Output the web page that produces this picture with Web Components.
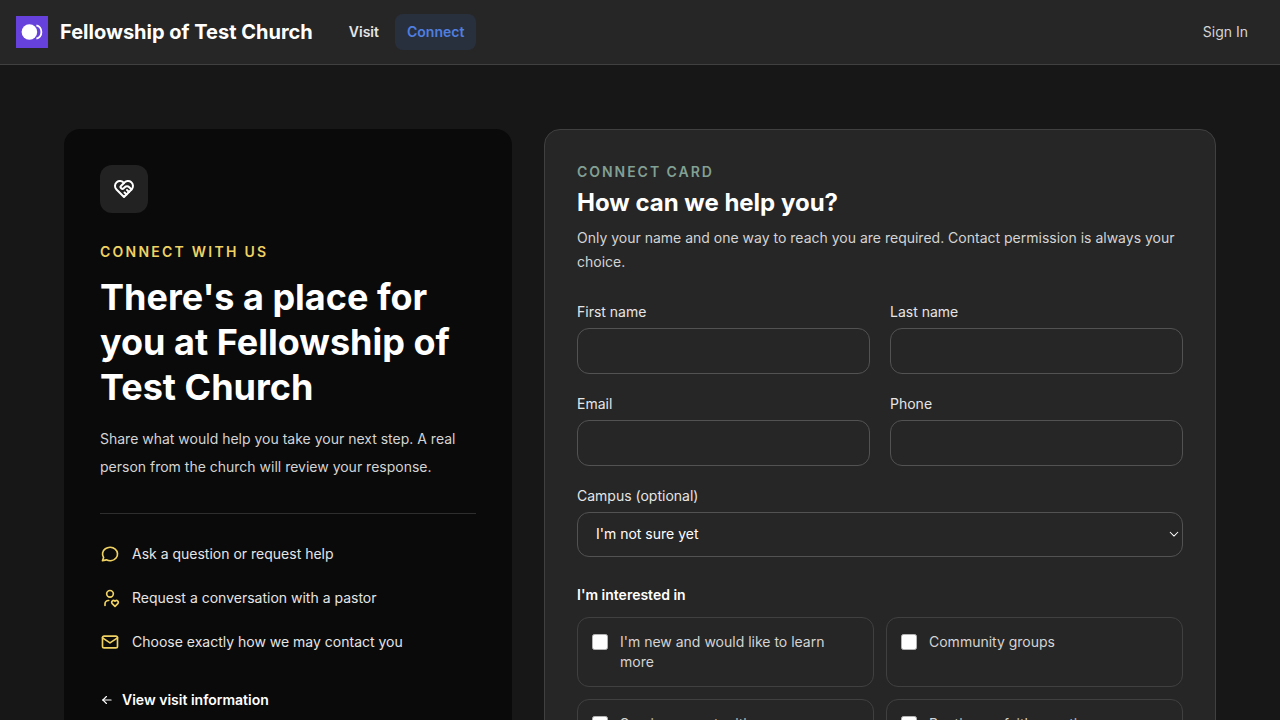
<!DOCTYPE html>
<html lang="en">
<head>
<meta charset="utf-8">
<title>Connect - Fellowship of Test Church</title>
<style>
  html { color-scheme: light; }

  body {
    margin: 0;
    height: 720px;
    overflow: hidden;
    background: #171717;
    color: #fff;
    font: 14px/20px Inter, sans-serif;
    -webkit-font-smoothing: antialiased;
  }
</style>
</head>
<body>
<connect-page>
  <site-header slot="header" name="Fellowship of Test Church">
    <nav-link>Visit</nav-link>
    <nav-link active>Connect</nav-link>
    <span slot="account">Sign In</span>
  </site-header>

  <welcome-panel eyebrow="Connect with us">
    <span slot="title">There's a place for you at Fellowship of Test Church</span>
    <span slot="text">Share what would help you take your next step. A real person from the church will review your response.</span>
    <icon-row icon="message">Ask a question or request help</icon-row>
    <icon-row icon="userHeart">Request a conversation with a pastor</icon-row>
    <icon-row icon="mail">Choose exactly how we may contact you</icon-row>
    <span slot="link">View visit information</span>
  </welcome-panel>

  <connect-card eyebrow="Connect card">
    <span slot="title">How can we help you?</span>
    <span slot="text">Only your name and one way to reach you are required. Contact permission is always your choice.</span>
    <text-field slot="field" label="First name"></text-field>
    <text-field slot="field" label="Last name"></text-field>
    <text-field slot="field" label="Email" type="email"></text-field>
    <text-field slot="field" label="Phone" type="tel"></text-field>
    <select-field slot="field" label="Campus (optional)" value="I'm not sure yet"></select-field>
    <check-option slot="option">I'm new and would like to learn more</check-option>
    <check-option slot="option">Community groups</check-option>
    <check-option slot="option">Serving opportunities</check-option>
    <check-option slot="option">Baptism or faith questions</check-option>
  </connect-card>
</connect-page>

<script>
const icons = {
  handshake: [
    'M19.5 12.572l-7.5 7.428l-7.5 -7.428a5 5 0 1 1 7.5 -6.566a5 5 0 1 1 7.5 6.572',
    'M12 6l-3.293 3.293a1 1 0 0 0 0 1.414l.543 .543c.69 .69 1.81 .69 2.5 0l1 -1a3.182 3.182 0 0 1 4.5 0l2.25 2.25',
    'M12.5 15.5l2 2',
    'M15 13l2 2'
  ],
  message: ['M3 20l1.3 -3.9c-2.324 -3.437 -1.426 -7.872 2.1 -10.374c3.526 -2.501 8.59 -2.296 11.845 .48c3.255 2.777 3.695 7.266 1.029 10.501c-2.666 3.235 -7.615 4.215 -11.574 2.293l-4.7 1'],
  userHeart: [
    'M8 7a4 4 0 1 0 8 0a4 4 0 0 0 -8 0',
    'M6 21v-2a4 4 0 0 1 4 -4h.5',
    'M18 22l3.35 -3.284a2.143 2.143 0 0 0 .005 -3.071a2.242 2.242 0 0 0 -3.129 -.006l-.224 .22l-.223 -.22a2.242 2.242 0 0 0 -3.128 -.006a2.143 2.143 0 0 0 -.006 3.071l3.355 3.296z'
  ],
  mail: [
    'M3 7a2 2 0 0 1 2 -2h14a2 2 0 0 1 2 2v10a2 2 0 0 1 -2 2h-14a2 2 0 0 1 -2 -2v-10z',
    'M3 7l9 6l9 -6'
  ],
  arrowLeft: ['M5 12l14 0', 'M5 12l6 6', 'M5 12l6 -6'],
  chevronDown: ['M5.5 9l6.5 6.5l6.5 -6.5']
}

function icon (name, size) {
  const paths = icons[name].map(d => `<path d="${d}"/>`).join('')
  return `<svg width="${size}" height="${size}" viewBox="0 0 24 24" fill="none" stroke="currentColor" stroke-width="2" stroke-linecap="round" stroke-linejoin="round" aria-hidden="true">${paths}</svg>`
}

class BaseElement extends HTMLElement {
  constructor () {
    super()
    this.attachShadow({ mode: 'open' })
  }

  connectedCallback () {
    this.shadowRoot.innerHTML = `<style>* { box-sizing: border-box; } svg { display: block; flex: none; } ${this.css}</style>${this.template}`
  }
}

customElements.define('connect-page', class extends BaseElement {
  css = /* css */ `
    :host { display: block; }

    main {
      display: grid;
      grid-template-columns: 448px 672px;
      gap: 32px;
      align-items: start;
      padding: 64px;
    }
  `
  template = /* html */ `
    <slot name="header"></slot>
    <main><slot></slot></main>
  `
})

customElements.define('site-header', class extends BaseElement {
  css = /* css */ `
    :host {
      display: flex;
      align-items: center;
      box-sizing: border-box;
      height: 65px;
      padding: 0 32px 0 16px;
      background: #262626;
      border-bottom: 1px solid #404040;
    }

    .name {
      margin: 0 24px 0 12px;
      font-size: 20px;
      line-height: 28px;
      font-weight: 700;
      white-space: nowrap;
    }

    nav { display: flex; gap: 4px; }
    .account { margin-left: auto; color: #d4d4d4; }
  `

  get template () {
    return /* html */ `
      <svg width="32" height="32" viewBox="0 0 32 32" aria-hidden="true">
        <rect width="32" height="32" fill="#6641db"/>
        <path d="M20.4 9.3A7 7 0 0 1 20.4 22.7" fill="none" stroke="#fff" stroke-width="1.8"/>
        <circle cx="13.4" cy="16" r="7.8" fill="#fff"/>
      </svg>
      <span class="name">${this.getAttribute('name')}</span>
      <nav><slot></slot></nav>
      <span class="account"><slot name="account"></slot></span>
    `
  }
})

customElements.define('nav-link', class extends BaseElement {
  css = /* css */ `
    :host {
      display: block;
      padding: 8px 12px;
      border-radius: 8px;
      color: #e5e5e5;
      font-weight: 600;
    }

    :host([active]) {
      background: #29303d;
      color: #4f7fe0;
    }
  `
  template = '<slot></slot>'
})

customElements.define('welcome-panel', class extends BaseElement {
  css = /* css */ `
    :host {
      display: block;
      box-sizing: border-box;
      padding: 36px;
      border-radius: 16px;
      background: #0a0a0a;
    }

    .badge {
      display: grid;
      place-items: center;
      width: 48px;
      height: 48px;
      border-radius: 12px;
      background: #222;
    }

    .eyebrow {
      margin: 29px 0 0;
      color: #f0d264;
      font-weight: 600;
      letter-spacing: 2.24px;
      text-transform: uppercase;
    }

    h1 {
      margin: 13px 0 0;
      font-size: 36px;
      line-height: 45px;
      font-weight: 700;
    }

    .text {
      margin: 15px 0 0;
      color: #d4d4d4;
      line-height: 28px;
    }

    .list {
      display: flex;
      flex-direction: column;
      gap: 24px;
      margin-top: 32px;
      padding-top: 30px;
      border-top: 1px solid #2e2e2e;
    }

    .link {
      display: flex;
      align-items: center;
      gap: 8px;
      margin-top: 38px;
      font-weight: 600;
    }
  `

  get template () {
    return /* html */ `
      <div class="badge">${icon('handshake', 24)}</div>
      <p class="eyebrow">${this.getAttribute('eyebrow')}</p>
      <h1><slot name="title"></slot></h1>
      <p class="text"><slot name="text"></slot></p>
      <div class="list"><slot></slot></div>
      <div class="link">${icon('arrowLeft', 14)}<slot name="link"></slot></div>
    `
  }
})

customElements.define('icon-row', class extends BaseElement {
  css = /* css */ `
    :host {
      display: flex;
      align-items: center;
      gap: 12px;
      color: #e5e5e5;
    }

    svg { color: #f0d264; }
  `

  get template () {
    return `${icon(this.getAttribute('icon'), 20)}<slot></slot>`
  }
})

customElements.define('connect-card', class extends BaseElement {
  css = /* css */ `
    :host {
      display: block;
      box-sizing: border-box;
      padding: 32px;
      border: 1px solid #404040;
      border-radius: 16px;
      background: #262626;
    }

    .eyebrow {
      margin: 0;
      color: #82a094;
      font-weight: 600;
      letter-spacing: 1.96px;
      text-transform: uppercase;
    }

    h2 {
      margin: 5px 0 0;
      font-size: 24px;
      line-height: 32px;
      font-weight: 700;
    }

    .text {
      margin: 7px 0 0;
      color: #d4d4d4;
      line-height: 24px;
    }

    .fields {
      display: grid;
      grid-template-columns: 1fr 1fr;
      gap: 20px;
      margin-top: 28px;
    }

    h3 {
      margin: 28px 0 0;
      font-size: 14px;
      font-weight: 600;
    }

    .options {
      display: grid;
      grid-template-columns: 1fr 1fr;
      gap: 12px;
      margin-top: 12px;
    }
  `

  get template () {
    return /* html */ `
      <p class="eyebrow">${this.getAttribute('eyebrow')}</p>
      <h2><slot name="title"></slot></h2>
      <p class="text"><slot name="text"></slot></p>
      <div class="fields"><slot name="field"></slot></div>
      <h3>I'm interested in</h3>
      <div class="options"><slot name="option"></slot></div>
    `
  }
})

customElements.define('text-field', class extends BaseElement {
  css = /* css */ `
    :host { display: block; }

    label { display: block; color: #e5e5e5; }

    input {
      display: block;
      width: 100%;
      height: 46px;
      margin: 6px 0 0;
      padding: 0 14px;
      border: 1px solid #525252;
      border-radius: 12px;
      background: transparent;
      color: #fff;
      font: inherit;
    }
  `

  get template () {
    return `<label>${this.getAttribute('label')}<input type="${this.getAttribute('type') || 'text'}"></label>`
  }
})

customElements.define('select-field', class extends BaseElement {
  css = /* css */ `
    :host { display: block; grid-column: 1 / -1; }

    .label { color: #e5e5e5; }

    .box {
      display: flex;
      align-items: center;
      justify-content: space-between;
      height: 45px;
      margin-top: 6px;
      padding: 0 1px 1px 18px;
      border: 1px solid #525252;
      border-radius: 12px;
    }

    svg { stroke-width: 1.8; }
  `

  get template () {
    return /* html */ `
      <div class="label">${this.getAttribute('label')}</div>
      <div class="box" role="combobox">
        <span>${this.getAttribute('value')}</span>
        ${icon('chevronDown', 14)}
      </div>
    `
  }
})

customElements.define('check-option', class extends BaseElement {
  css = /* css */ `
    :host { display: block; }

    label {
      display: flex;
      align-items: flex-start;
      gap: 12px;
      height: 100%;
      padding: 14px;
      border: 1px solid #404040;
      border-radius: 12px;
      color: #d4d4d4;
    }

    input {
      appearance: none;
      flex: none;
      width: 16px;
      height: 16px;
      margin: 2px 0 0;
      border: 1px solid #b4b4b4;
      border-radius: 2.5px;
      background: #fff;
    }
  `
  template = '<label><input type="checkbox"><span><slot></slot></span></label>'
})
</script>
</body>
</html>
